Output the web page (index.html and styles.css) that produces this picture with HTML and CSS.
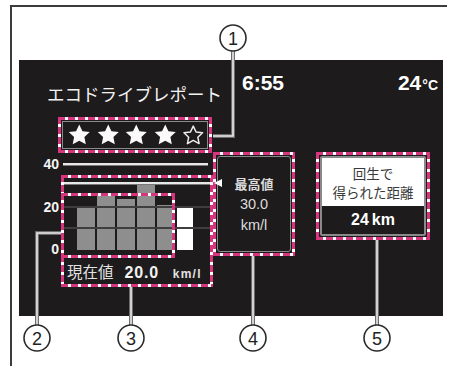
FILE: index.html
```html
<!DOCTYPE html>
<html lang="ja">
<head>
  <meta charset="UTF-8" />
  <meta name="viewport" content="width=device-width, initial-scale=1.0" />
  <title>エコドライブレポート</title>
  <link rel="stylesheet" href="styles.css">
</head>
<body>
  <div class="page">
    <div class="sheet">
      <div class="panel">
        <div class="head">
          <div class="title">エコドライブレポート</div>
          <div class="clock">6:55</div>
          <div class="temp">24<span>°C</span></div>
        </div>

        <div class="main">
          <div class="left">
            <div class="dash callout rating">
              <div class="stars">
                <svg viewBox="0 0 24 24"><path class="on" d="M12 0.6l3.4 7 7.8 1-5.7 5.3 1.5 7.7L12 17.8l-7 3.8 1.5-7.7-5.7-5.3 7.8-1z"/></svg>
                <svg viewBox="0 0 24 24"><path class="on" d="M12 0.6l3.4 7 7.8 1-5.7 5.3 1.5 7.7L12 17.8l-7 3.8 1.5-7.7-5.7-5.3 7.8-1z"/></svg>
                <svg viewBox="0 0 24 24"><path class="on" d="M12 0.6l3.4 7 7.8 1-5.7 5.3 1.5 7.7L12 17.8l-7 3.8 1.5-7.7-5.7-5.3 7.8-1z"/></svg>
                <svg viewBox="0 0 24 24"><path class="on" d="M12 0.6l3.4 7 7.8 1-5.7 5.3 1.5 7.7L12 17.8l-7 3.8 1.5-7.7-5.7-5.3 7.8-1z"/></svg>
                <svg viewBox="0 0 24 24"><path class="off" d="M12 2.2l3 6.3 6.9.9-5 4.7 1.3 6.8L12 17.5l-6.2 3.4 1.3-6.8-5-4.7 6.9-.9z"/></svg>
              </div>
            </div>

            <div class="axis">
              <span class="tick">40</span>
              <span class="rule"></span>
            </div>

            <div class="plot">
              <div class="ticks">
                <span class="t20">20</span>
                <span class="t0">0</span>
              </div>
              <div class="dash callout current">
                <div class="chart">
                  <div class="max"></div>
                  <div class="gl g20"></div>
                  <div class="gl g10"></div>
                  <div class="bar first" style="height:44px"></div>
                  <div class="bar" style="height:54px"></div>
                  <div class="bar" style="height:51px"></div>
                  <div class="bar" style="height:66px"></div>
                  <div class="bar" style="height:45px"></div>
                  <div class="bar now" style="height:43px"></div>
                  <div class="dash window"></div>
                </div>
                <div class="reading">
                  <span class="label">現在値</span>
                  <span class="val">20.0</span>
                  <span class="unit">km/l</span>
                </div>
              </div>
            </div>
          </div>

          <div class="dash callout best">
            <span class="marker"></span>
            <div class="best-in">
              <span class="jp">最高値</span>
              <span>30.0</span>
              <span>km/l</span>
            </div>
          </div>

          <div class="dash callout regen">
            <div class="regen-in">
              <div class="regen-top">回生で<br>得られた距離</div>
              <div class="regen-val">24<span>km</span></div>
            </div>
          </div>
        </div>
      </div>
    </div>

    <svg class="notes" width="450" height="366" viewBox="0 0 450 366">
      <g class="lead">
        <path d="M233 51V136H213"/>
        <path d="M61 233H37V325"/>
        <path d="M131 287V325"/>
        <path d="M253 256V325"/>
        <path d="M377 240V325"/>
      </g>
      <g class="lead inner">
        <path d="M233 51V136H213"/>
        <path d="M61 233H37V325"/>
        <path d="M131 287V325"/>
        <path d="M253 256V325"/>
        <path d="M377 240V325"/>
      </g>
      <g class="num">
        <circle cx="233" cy="38" r="13"/><text x="233" y="39">1</text>
        <circle cx="37" cy="338" r="13"/><text x="37" y="339">2</text>
        <circle cx="131" cy="338" r="13"/><text x="131" y="339">3</text>
        <circle cx="253" cy="338" r="13"/><text x="253" y="339">4</text>
        <circle cx="377" cy="338" r="13"/><text x="377" y="339">5</text>
      </g>
    </svg>
  </div>
</body>
</html>
```

FILE: styles.css
```css
body {
  margin: 0;
  background: #fff;
  font-family: "Liberation Sans", "Noto Sans CJK JP", sans-serif;
}
.page {
  position: relative;
  width: 450px;
  height: 366px;
  overflow: hidden;
}
.sheet {
  box-sizing: border-box;
  margin: 5px 0 0 10px;
  width: 437px;
  height: 361px;
  padding: 53px 0 0 7px;
  border-top: 2px solid #3c3c3c;
  border-left: 2px solid #3c3c3c;
}
.panel {
  width: 424px;
  height: 256px;
  background: #1e1b1c;
  color: #eee;
}

/* header */
.head {
  display: flex;
  align-items: flex-start;
  height: 57px;
}
.title {
  font-family: "Noto Sans CJK JP", sans-serif;
  font-size: 17.5px;
  line-height: 20px;
  width: 195px;
  margin: 24px 0 0 28px;
  color: #f2f2f2;
  white-space: nowrap;
}
.clock {
  font-size: 21px;
  line-height: 21px;
  font-weight: bold;
  margin-top: 12px;
  color: #fff;
}
.temp {
  margin: 12px 5px 0 auto;
  font-size: 21px;
  line-height: 21px;
  font-weight: bold;
  color: #fff;
}
.temp span {
  font-size: 14px;
  margin-left: 1px;
}

/* dashed callout frame */
.dash {
  background-image:
    repeating-linear-gradient(90deg, #d8357f 0 7px, #fff 7px 10px),
    repeating-linear-gradient(90deg, #d8357f 0 7px, #fff 7px 10px),
    repeating-linear-gradient(180deg, #d8357f 0 7px, #fff 7px 10px),
    repeating-linear-gradient(180deg, #d8357f 0 7px, #fff 7px 10px);
  background-size: 100% 3px, 100% 3px, 3px 100%, 3px 100%;
  background-position: top left, bottom left, top left, top right;
  background-repeat: no-repeat;
}
.callout {
  box-sizing: border-box;
  background-color: #1e1b1c;
  padding: 4px;
}

.main {
  display: flex;
  align-items: flex-start;
}
.left {
  width: 194px;
}

/* stars */
.rating {
  margin-left: 39px;
  width: 154px;
  height: 36px;
}
.stars {
  box-sizing: border-box;
  height: 28px;
  border: 1.5px solid #8a8a8a;
  display: flex;
  align-items: center;
  gap: 6px;
  padding-left: 5px;
}
.stars svg {
  width: 22.5px;
  height: 22.5px;
}
.stars .on {
  fill: #fafafa;
}
.stars .off {
  fill: none;
  stroke: #eee;
  stroke-width: 1.6;
  stroke-linejoin: round;
}

/* axis */
.axis {
  display: flex;
  align-items: center;
  height: 22px;
}
.tick, .ticks span {
  font-size: 14px;
  line-height: 14px;
  font-weight: bold;
  color: #f4f4f4;
}
.tick {
  width: 40px;
  text-align: right;
}
.rule {
  margin-left: 4px;
  width: 145px;
  height: 2px;
  background: #e8e8e8;
  border-bottom: 1px solid #7a7a7a;
}

.plot {
  display: flex;
}
.ticks {
  width: 40px;
  display: flex;
  flex-direction: column;
  align-items: flex-end;
  margin-right: 2px;
}
.t20 {
  margin-top: 25px;
}
.t0 {
  margin-top: 28px;
}

/* current value box */
.current {
  width: 152px;
  height: 112px;
  padding: 3px;
  position: relative;
}
.chart {
  position: relative;
  height: 78px;
  display: flex;
  align-items: flex-end;
  box-sizing: border-box;
  padding-bottom: 6px;
}
.bar {
  width: 18px;
  margin-left: 2px;
  background: #8e8e8e;
}
.bar.first {
  margin-left: 13px;
}
.bar.now {
  width: 16px;
  background: #fff;
}
.max {
  position: absolute;
  left: 0;
  right: 0;
  top: 4px;
  height: 2px;
  background: #e8e8e8;
  border-bottom: 1px solid #777;
  z-index: 1;
}
.gl {
  position: absolute;
  left: 0;
  right: 0;
  height: 2px;
  background: #3e3e3e;
  z-index: 1;
}
.g20 { top: 28px; }
.g10 { top: 49px; }
.window {
  position: absolute;
  left: -3px;
  top: 15px;
  width: 114px;
  height: 65px;
  z-index: 2;
}
.reading {
  display: flex;
  align-items: baseline;
  height: 28px;
  line-height: 30px;
  padding-left: 3px;
  color: #e2e2e2;
}
.reading .label {
  font-family: "Noto Sans CJK JP", sans-serif;
  font-size: 15.5px;
}
.reading .val {
  margin-left: 11px;
  font-size: 16px;
  font-weight: bold;
  letter-spacing: 0.8px;
  color: #f2f2f2;
}
.reading .unit {
  margin-left: 14px;
  font-size: 12px;
  font-weight: bold;
  letter-spacing: 1.2px;
}

/* best value box */
.best {
  position: relative;
  margin-top: 35px;
  width: 82px;
  height: 104px;
}
.marker {
  position: absolute;
  left: 1px;
  top: 27px;
  width: 0;
  height: 0;
  border-top: 4.5px solid transparent;
  border-bottom: 4.5px solid transparent;
  border-right: 8px solid #fff;
}
.best-in {
  box-sizing: border-box;
  height: 96px;
  border: 1.5px solid #8a8a8a;
  border-radius: 3px;
  display: flex;
  flex-direction: column;
  align-items: center;
  justify-content: center;
  font-size: 14.5px;
  line-height: 21px;
  color: #dcdcdc;
}
.best-in .jp {
  font-family: "Noto Sans CJK JP", sans-serif;
  font-weight: bold;
  font-size: 13px;
}

/* regen box */
.regen {
  margin: 35px 0 0 21px;
  width: 114px;
  height: 88px;
}
.regen-in {
  border: 2px solid #8a8a8a;
  border-radius: 2px;
  height: 76px;
}
.regen-top {
  height: 48px;
  box-sizing: border-box;
  padding-top: 6px;
  background: #fff;
  color: #3a3a3a;
  text-align: center;
  font-family: "Noto Sans CJK JP", sans-serif;
  font-size: 13.5px;
  line-height: 19px;
}
.regen-val {
  height: 28px;
  line-height: 28px;
  text-align: center;
  font-size: 16px;
  font-weight: bold;
  color: #fff;
}
.regen-val span {
  margin-left: 3px;
}

/* annotation layer */
.notes {
  position: absolute;
  left: 0;
  top: 0;
  pointer-events: none;
}
.lead path {
  fill: none;
  stroke: #6c6c6c;
  stroke-width: 4;
}
.lead.inner path {
  stroke: #ececec;
  stroke-width: 1.6;
}
.num circle {
  fill: #fff;
  stroke: #2b2b2b;
  stroke-width: 1.6;
}
.num text {
  font-family: "Liberation Sans", sans-serif;
  font-size: 18px;
  fill: #222;
  text-anchor: middle;
  dominant-baseline: central;
}
```
